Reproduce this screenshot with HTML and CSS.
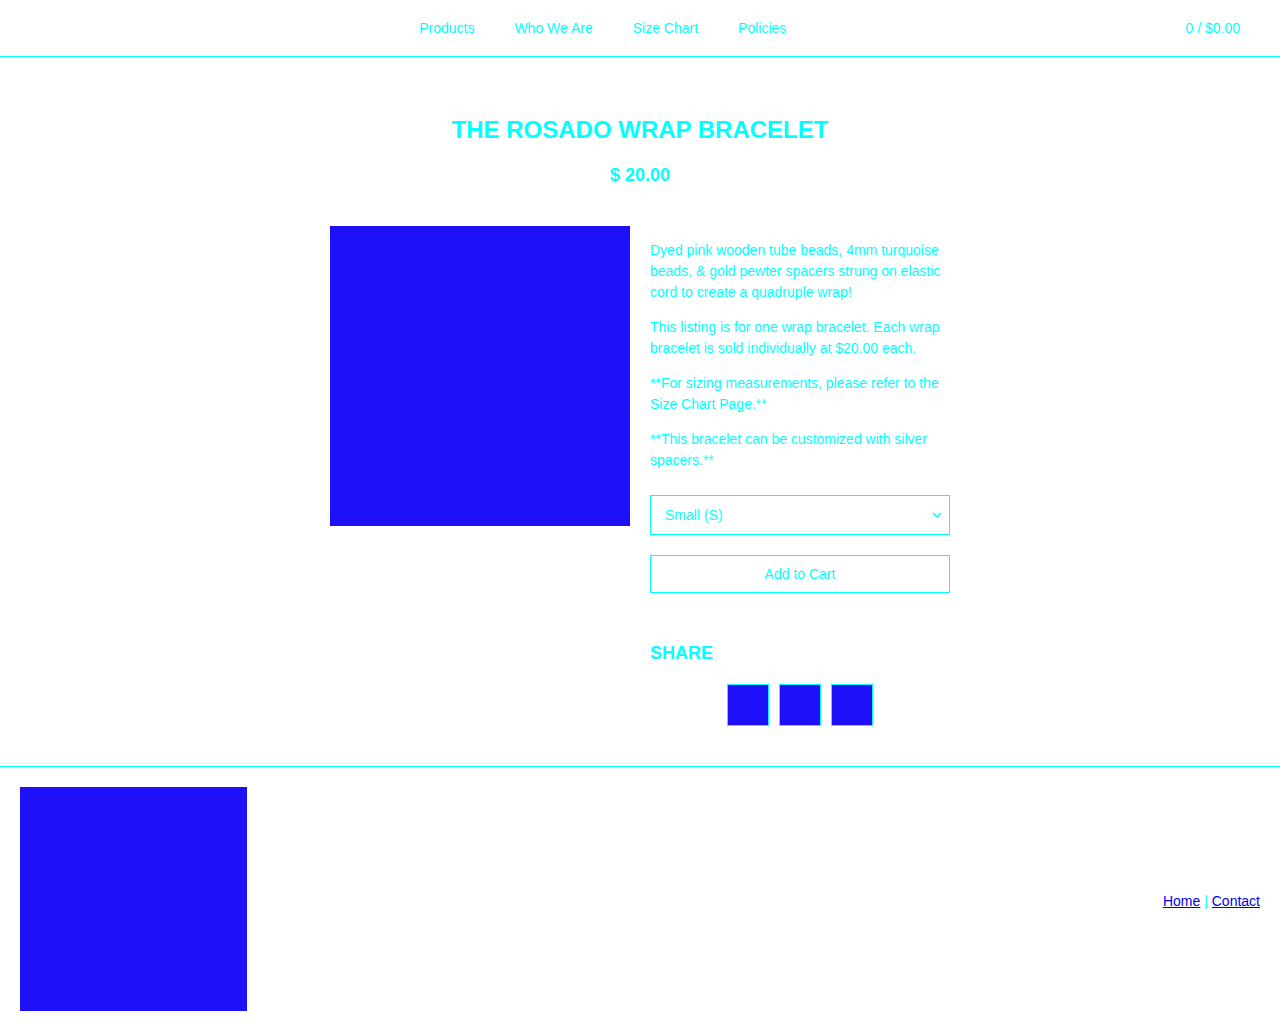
FILE: index.html
```html
<!DOCTYPE html>
<html>
<head>
<meta charset="utf-8">
<link rel="stylesheet" href="styles.css">
</head>
<body>
<header class="site-header">
  <nav class="main-nav">
    <a href="#">Products</a>
    <a href="#">Who We Are</a>
    <a href="#">Size Chart</a>
    <a href="#">Policies</a>
  </nav>
  <a class="cart" href="#">0 / $0.00</a>
</header>
<main class="product">
  <h1 class="product-title">THE ROSADO WRAP BRACELET</h1>
  <div class="product-price">$ 20.00</div>
  <div class="product-body">
    <div class="product-image"></div>
    <div class="product-info">
      <p>Dyed pink wooden tube beads, 4mm turquoise beads, &amp; gold pewter spacers strung on elastic cord to create a quadruple wrap!</p>
      <p>This listing is for one wrap bracelet. Each wrap bracelet is sold individually at $20.00 each.</p>
      <p>**For sizing measurements, please refer to the Size Chart Page.**</p>
      <p>**This bracelet can be customized with silver spacers.**</p>
      <div class="select-box">
        <span>Small (S)</span>
        <svg class="chev" width="10" height="6" viewBox="0 0 10 6"><path d="M1 1 L5 5 L9 1" fill="none" stroke="#00ffff" stroke-width="1.6"/></svg>
      </div>
      <button class="add-btn">Add to Cart</button>
      <h2 class="share-title">SHARE</h2>
      <div class="share-icons">
        <span class="share-icon"></span>
        <span class="share-icon"></span>
        <span class="share-icon"></span>
      </div>
    </div>
  </div>
</main>
<footer class="site-footer">
  <div class="footer-logo"></div>
  <div class="footer-links"><a href="#">Home</a> <span class="sep">|</span> <a href="#">Contact</a></div>
</footer>
</body>
</html>
```

FILE: styles.css
```css
* { box-sizing: border-box; }
body {
  margin: 0;
  font-family: "Liberation Sans", Arial, sans-serif;
  color: #00ffff;
  background: #fff;
}
.site-header {
  height: 57px;
  border-bottom: 1px solid #00ffff;
  display: flex;
  align-items: center;
  padding: 0 40px;
}
.main-nav {
  flex: 1;
  display: flex;
  justify-content: center;
  gap: 40px;
  font-size: 14px;
}
.main-nav a, .cart {
  color: #00ffff;
  text-decoration: none;
}
.cart {
  margin-left: 20px;
  font-size: 14px;
}
.product {
  width: 620px;
  margin: 0 auto;
  padding: 58px 0 40px;
}
.product-title {
  margin: 0;
  text-align: center;
  font-size: 24px;
  line-height: 30px;
  font-weight: bold;
}
.product-price {
  text-align: center;
  font-size: 18px;
  font-weight: bold;
  line-height: 22px;
  margin-top: 19px;
}
.product-body {
  display: flex;
  gap: 20px;
  margin-top: 40px;
}
.product-image {
  width: 300px;
  height: 300px;
  background: #1e10f8;
  flex: none;
}
.product-info {
  width: 300px;
  font-size: 14px;
  line-height: 21px;
}
.product-info p { margin: 14px 0; }
.select-box {
  margin-top: 24px;
  height: 40px;
  border: 1px solid #00ffff;
  display: flex;
  align-items: center;
  justify-content: space-between;
  padding: 0 7px 0 14px;
}
.add-btn {
  display: block;
  width: 100%;
  height: 38px;
  margin-top: 20px;
  background: #fff;
  border: 1px solid #00ffff;
  color: #00ffff;
  font-family: inherit;
  font-size: 14px;
}
.share-title {
  margin: 40px 0 0;
  font-size: 18px;
  line-height: 40px;
}
.share-icons {
  display: flex;
  justify-content: center;
  gap: 10px;
  margin-top: 11px;
}
.share-icon {
  width: 42px;
  height: 42px;
  background: #1e10f8;
  border: 1px solid #00ffff;
}
.site-footer {
  border-top: 1px solid #00ffff;
  padding: 20px;
  display: flex;
  justify-content: space-between;
  align-items: center;
}
.footer-logo {
  width: 227px;
  height: 224px;
  background: #1e10f8;
}
.footer-links { font-size: 14px; padding-top: 4px; }
.footer-links a { color: #0000ee; }
.sep { color: #00ffff; }
```
